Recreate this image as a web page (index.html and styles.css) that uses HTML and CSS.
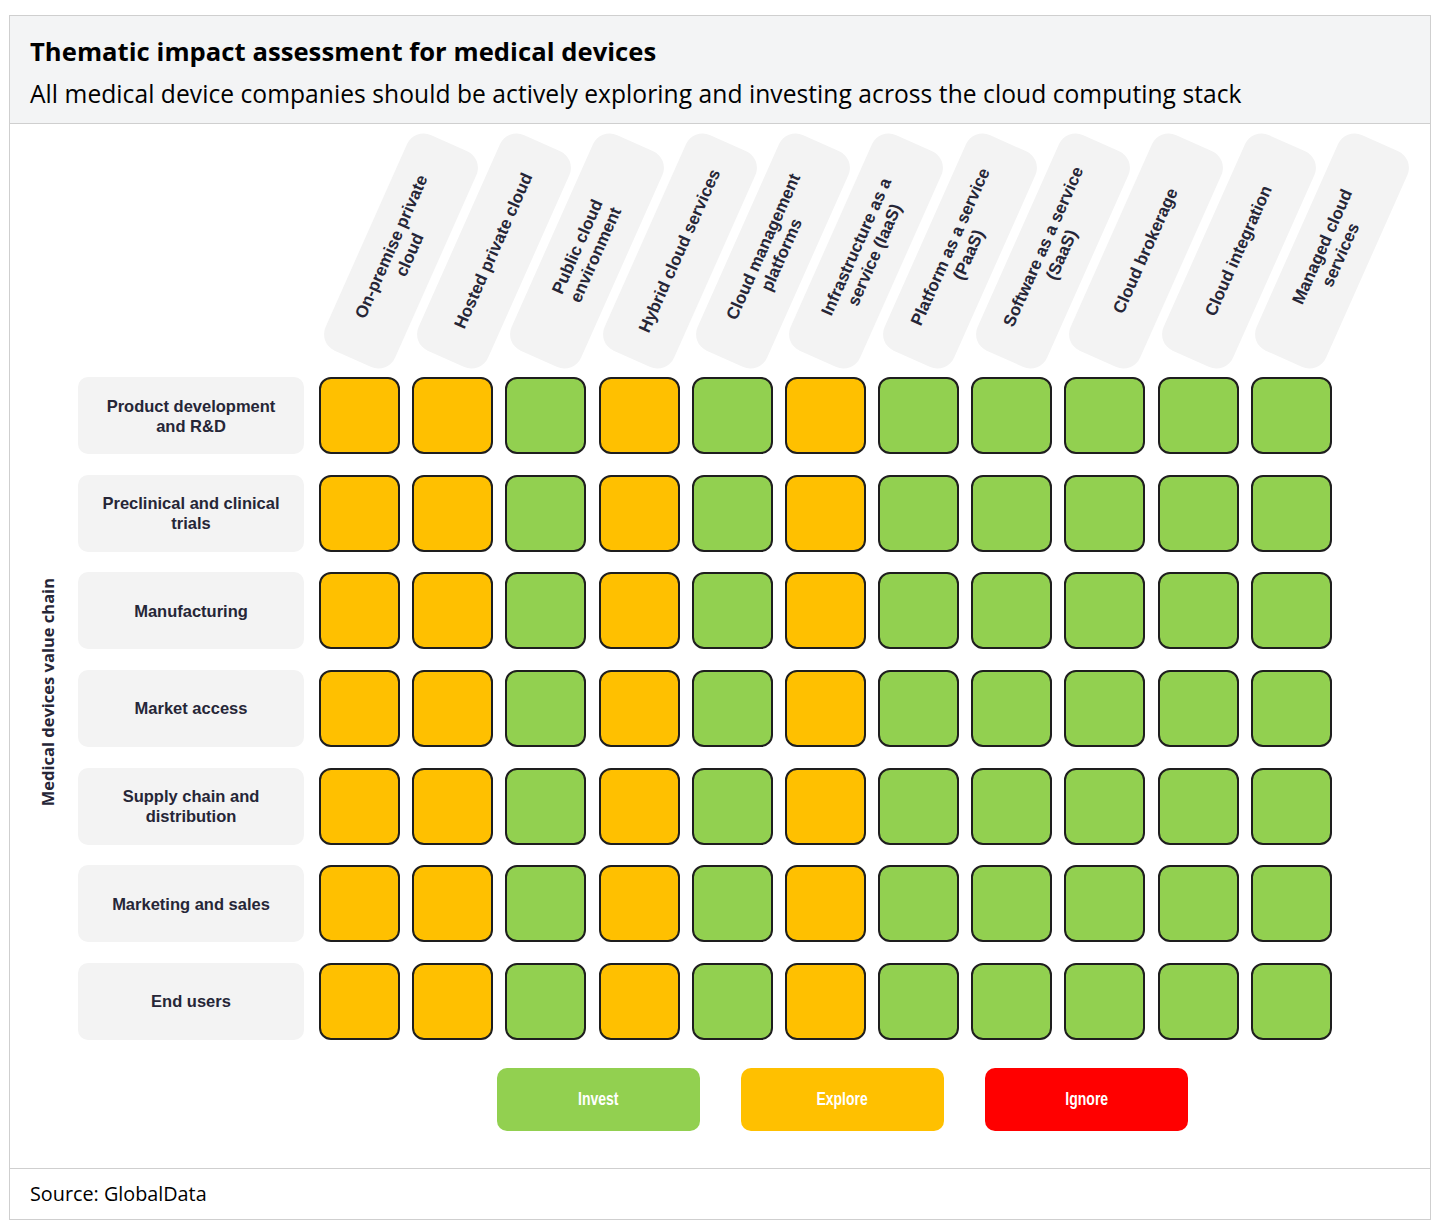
FILE: index.html
```html
<!DOCTYPE html>
<html lang="en">
<head>
<meta charset="utf-8">
<title>Thematic impact assessment for medical devices</title>
<link rel="stylesheet" href="styles.css">
</head>
<body>
<div class="frame">
  <header class="header">
    <h1 class="title">Thematic impact assessment for medical devices</h1>
    <p class="subtitle">All medical device companies should be actively exploring and investing across the cloud computing stack</p>
  </header>

  <main class="main">
    <div class="colheads">
      <div class="colhead"><div class="tag">On-premise private<br>cloud</div></div>
      <div class="colhead"><div class="tag">Hosted private cloud</div></div>
      <div class="colhead"><div class="tag">Public cloud<br>environment</div></div>
      <div class="colhead"><div class="tag">Hybrid cloud services</div></div>
      <div class="colhead"><div class="tag">Cloud management<br>platforms</div></div>
      <div class="colhead"><div class="tag">Infrastructure as a<br>service (IaaS)</div></div>
      <div class="colhead"><div class="tag">Platform as a service<br>(PaaS)</div></div>
      <div class="colhead"><div class="tag">Software as a service<br>(SaaS)</div></div>
      <div class="colhead"><div class="tag">Cloud brokerage</div></div>
      <div class="colhead"><div class="tag">Cloud integration</div></div>
      <div class="colhead"><div class="tag">Managed cloud<br>services</div></div>
    </div>

    <div class="chart">
      <div class="axis"><span class="axis-text">Medical devices value chain</span></div>
      <div class="rows">
        <div class="row">
          <div class="rowlabel">Product development<br>and R&amp;D</div>
          <div class="cell o"></div><div class="cell o"></div><div class="cell g"></div><div class="cell o"></div><div class="cell g"></div><div class="cell o"></div><div class="cell g"></div><div class="cell g"></div><div class="cell g"></div><div class="cell g"></div><div class="cell g"></div>
        </div>
        <div class="row">
          <div class="rowlabel">Preclinical and clinical<br>trials</div>
          <div class="cell o"></div><div class="cell o"></div><div class="cell g"></div><div class="cell o"></div><div class="cell g"></div><div class="cell o"></div><div class="cell g"></div><div class="cell g"></div><div class="cell g"></div><div class="cell g"></div><div class="cell g"></div>
        </div>
        <div class="row">
          <div class="rowlabel">Manufacturing</div>
          <div class="cell o"></div><div class="cell o"></div><div class="cell g"></div><div class="cell o"></div><div class="cell g"></div><div class="cell o"></div><div class="cell g"></div><div class="cell g"></div><div class="cell g"></div><div class="cell g"></div><div class="cell g"></div>
        </div>
        <div class="row">
          <div class="rowlabel">Market access</div>
          <div class="cell o"></div><div class="cell o"></div><div class="cell g"></div><div class="cell o"></div><div class="cell g"></div><div class="cell o"></div><div class="cell g"></div><div class="cell g"></div><div class="cell g"></div><div class="cell g"></div><div class="cell g"></div>
        </div>
        <div class="row">
          <div class="rowlabel">Supply chain and<br>distribution</div>
          <div class="cell o"></div><div class="cell o"></div><div class="cell g"></div><div class="cell o"></div><div class="cell g"></div><div class="cell o"></div><div class="cell g"></div><div class="cell g"></div><div class="cell g"></div><div class="cell g"></div><div class="cell g"></div>
        </div>
        <div class="row">
          <div class="rowlabel">Marketing and sales</div>
          <div class="cell o"></div><div class="cell o"></div><div class="cell g"></div><div class="cell o"></div><div class="cell g"></div><div class="cell o"></div><div class="cell g"></div><div class="cell g"></div><div class="cell g"></div><div class="cell g"></div><div class="cell g"></div>
        </div>
        <div class="row">
          <div class="rowlabel">End users</div>
          <div class="cell o"></div><div class="cell o"></div><div class="cell g"></div><div class="cell o"></div><div class="cell g"></div><div class="cell o"></div><div class="cell g"></div><div class="cell g"></div><div class="cell g"></div><div class="cell g"></div><div class="cell g"></div>
        </div>
      </div>
    </div>

    <div class="legend">
      <div class="key key-invest"><span class="key-text">Invest</span></div>
      <div class="key key-explore"><span class="key-text">Explore</span></div>
      <div class="key key-ignore"><span class="key-text">Ignore</span></div>
    </div>
  </main>

  <footer class="footer">Source: GlobalData</footer>
</div>
</body>
</html>
```

FILE: styles.css
```css
* { box-sizing: border-box; }

html, body {
  margin: 0;
  padding: 0;
  background: #ffffff;
}

.frame {
  margin: 15px 0 0 9px;
  width: 1422px;
  border: 1px solid #cfcfcf;
  background: #ffffff;
}

.header {
  height: 108px;
  background: #f3f4f5;
  border-bottom: 1px solid #cfcfcf;
  padding: 21px 20px 0 20px;
  font-family: "Open Sans", Lato, sans-serif;
  color: #000000;
}

.title {
  margin: 0;
  font-size: 25.6px;
  line-height: 30px;
  font-weight: 700;
  letter-spacing: 0.05px;
}

.subtitle {
  margin: 12px 0 0 0;
  font-size: 24.6px;
  line-height: 30px;
  font-weight: 400;
  letter-spacing: 0.05px;
}

.main {
  padding-bottom: 37px;
}

.colheads {
  display: flex;
  gap: 12.2px;
  margin-left: 309px;
  height: 253px;
}

.colhead {
  width: 81px;
  flex: none;
  display: flex;
  align-items: center;
  justify-content: center;
}

.tag {
  flex: none;
  width: 236px;
  height: 76px;
  border-radius: 18px;
  background: #f3f3f3;
  display: flex;
  align-items: center;
  justify-content: center;
  text-align: center;
  font-family: "Liberation Sans", Arial, sans-serif;
  font-weight: 700;
  font-size: 17px;
  line-height: 20px;
  color: #262637;
  transform: translateX(41px) rotate(-66deg);
}

.chart {
  display: flex;
}

.axis {
  width: 68px;
  flex: none;
  display: flex;
  align-items: center;
  justify-content: center;
  padding-left: 8px;
  padding-bottom: 32px;
}

.axis-text {
  writing-mode: vertical-rl;
  transform: rotate(180deg);
  font-family: "Open Sans", sans-serif;
  font-weight: 700;
  font-size: 16.5px;
  line-height: 20px;
  color: #262637;
  white-space: nowrap;
}

.rows {
  display: flex;
  flex-direction: column;
  gap: 20.67px;
}

.row {
  display: flex;
  gap: 12.2px;
  height: 77px;
}

.rowlabel {
  width: 226px;
  flex: none;
  margin-right: 2.8px;
  background: #f3f3f3;
  border-radius: 10px;
  display: flex;
  align-items: center;
  justify-content: center;
  text-align: center;
  font-family: "Liberation Sans", Arial, sans-serif;
  font-weight: 700;
  font-size: 16.5px;
  line-height: 20px;
  color: #262637;
}

.cell {
  width: 81px;
  flex: none;
  border: 2px solid #1e1e1e;
  border-radius: 12px;
}

.cell.o { background: #ffc000; }
.cell.g { background: #92d050; }

.legend {
  display: flex;
  gap: 41px;
  margin: 28px 0 0 487px;
}

.key {
  width: 203px;
  height: 63px;
  border-radius: 10px;
  display: flex;
  align-items: center;
  justify-content: center;
  color: #ffffff;
  font-family: "Liberation Sans", Arial, sans-serif;
  font-weight: 700;
  font-size: 17.5px;
}

.key-text {
  display: inline-block;
  transform: scaleX(0.8);
}

.key-invest { background: #92d050; }
.key-explore { background: #ffc000; }
.key-ignore { background: #ff0000; }

.footer {
  height: 51px;
  border-top: 1px solid #cfcfcf;
  padding-left: 20px;
  display: flex;
  align-items: center;
  font-family: "Open Sans", Lato, sans-serif;
  font-size: 19.8px;
  color: #000000;
}
```
